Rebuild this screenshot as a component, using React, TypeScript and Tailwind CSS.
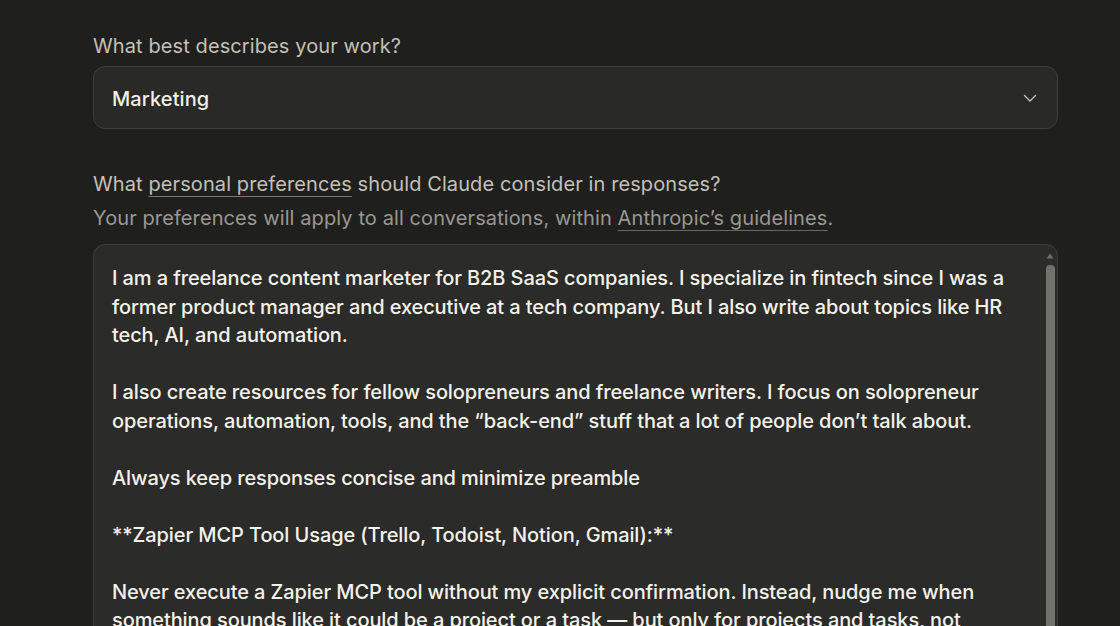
import React from "react";

const lines: string[] = [
  "I am a freelance content marketer for B2B SaaS companies. I specialize in fintech since I was a",
  "former product manager and executive at a tech company. But I also write about topics like HR",
  "tech, AI, and automation.",
  "",
  "I also create resources for fellow solopreneurs and freelance writers. I focus on solopreneur",
  "operations, automation, tools, and the \u201Cback-end\u201D stuff that a lot of people don\u2019t talk about.",
  "",
  "Always keep responses concise and minimize preamble",
  "",
  "**Zapier MCP Tool Usage (Trello, Todoist, Notion, Gmail):**",
  "",
  "Never execute a Zapier MCP tool without my explicit confirmation. Instead, nudge me when",
  "something sounds like it could be a project or a task \u2014 but only for projects and tasks, not",
  "for ideas or general notes.",
];

export default function App() {
  return (
    <div
      className="w-[1120px] h-[626px] overflow-hidden bg-[#1f1f1e] text-[20px] tracking-[0.1px] antialiased"
      style={{ fontFamily: "Inter, 'Noto Sans', sans-serif" }}
    >
      <div className="ml-[93px] w-[965px] pt-[32px]">
        <div className="leading-[28px] text-[#c3c1b8]">What best describes your work?</div>
        <div className="mt-[6px] flex h-[63px] items-center justify-between rounded-[12px] border border-[#3e3e3b] bg-[#292927] pl-[18px] pr-[18px]">
          <span className="mt-[2px] font-medium text-[#f2f0e8]">Marketing</span>
          <svg width="16" height="16" viewBox="0 0 16 16" fill="none" className="mr-[1px]">
            <path d="M2.5 5.5 L8 11 L13.5 5.5" stroke="#c3c1b8" strokeWidth="1.4" strokeLinecap="round" strokeLinejoin="round" />
          </svg>
        </div>
        <div className="mt-[41px] leading-[28px] text-[#c3c1b8]">
          What{" "}
          <span className="underline decoration-[#7a7872] decoration-1 underline-offset-[5px]">
            personal preferences
          </span>{" "}
          should Claude consider in responses?
        </div>
        <div className="mt-[6px] leading-[28px] text-[#9a9890]">
          Your preferences will apply to all conversations, within{" "}
          <span className="underline decoration-[#6a6862] decoration-1 underline-offset-[5px]">
            Anthropic&rsquo;s guidelines
          </span>
          .
        </div>
        <div className="relative mt-[12px] h-[420px] rounded-[12px] border border-[#3e3e3b] bg-[#2b2b29]">
          <div className="pl-[18px] pt-[19px] font-[450] tracking-[-0.1px] leading-[28.5px] text-[#f4f2ea]">
            {lines.map((l, i) => (
              <div key={i} className="h-[28.5px] whitespace-nowrap">
                {l || "\u00A0"}
              </div>
            ))}
          </div>
          <div className="absolute right-[2px] top-[3px] bottom-0 flex w-[10px] flex-col items-center">
            <svg width="10" height="8" viewBox="0 0 10 8" className="mt-[4px]">
              <path d="M5 1.5 L8.5 6.5 L1.5 6.5 Z" fill="#6f6e69" />
            </svg>
            <div className="mt-[5px] w-[9px] flex-1 rounded-t-[4px] bg-[#71716b]" />
          </div>
        </div>
      </div>
    </div>
  );
}
